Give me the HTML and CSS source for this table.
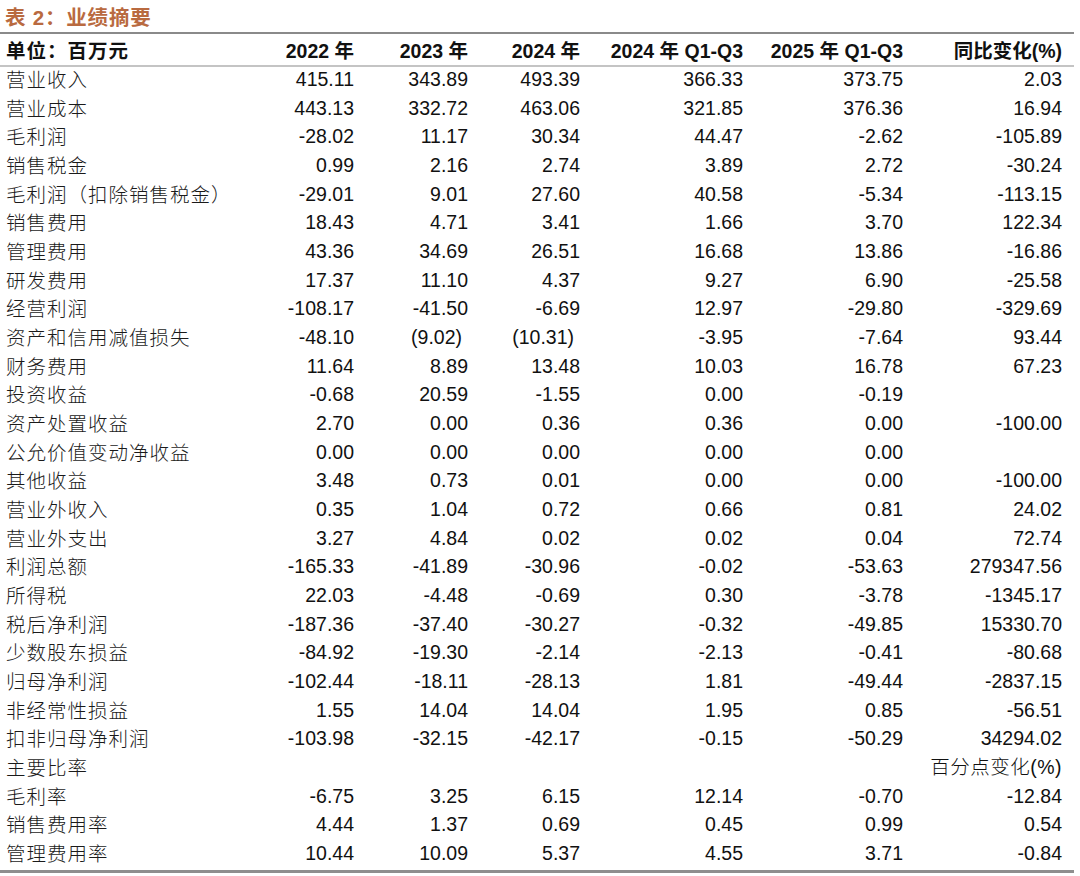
FILE: index.html
```html
<!DOCTYPE html>
<html lang="zh-CN">
<head>
<meta charset="utf-8">
<title>业绩摘要</title>
<link rel="stylesheet" href="styles.css">
</head>
<body>
<div class="wrap">
  <div class="title">表 2：业绩摘要</div>
  <table class="tbl">
    <colgroup>
      <col class="c-label"><col class="c1"><col class="c2"><col class="c3"><col class="c4"><col class="c5"><col class="c6">
    </colgroup>
    <thead>
      <tr>
        <th class="lbl">单位：百万元</th>
        <th>2022 年</th>
        <th>2023 年</th>
        <th>2024 年</th>
        <th>2024 年 Q1-Q3</th>
        <th>2025 年 Q1-Q3</th>
        <th>同比变化(%)</th>
      </tr>
    </thead>
    <tbody>
      <tr><td class="lbl">营业收入</td><td>415.11</td><td>343.89</td><td>493.39</td><td>366.33</td><td>373.75</td><td>2.03</td></tr>
      <tr><td class="lbl">营业成本</td><td>443.13</td><td>332.72</td><td>463.06</td><td>321.85</td><td>376.36</td><td>16.94</td></tr>
      <tr><td class="lbl">毛利润</td><td>-28.02</td><td>11.17</td><td>30.34</td><td>44.47</td><td>-2.62</td><td>-105.89</td></tr>
      <tr><td class="lbl">销售税金</td><td>0.99</td><td>2.16</td><td>2.74</td><td>3.89</td><td>2.72</td><td>-30.24</td></tr>
      <tr><td class="lbl">毛利润（扣除销售税金）</td><td>-29.01</td><td>9.01</td><td>27.60</td><td>40.58</td><td>-5.34</td><td>-113.15</td></tr>
      <tr><td class="lbl">销售费用</td><td>18.43</td><td>4.71</td><td>3.41</td><td>1.66</td><td>3.70</td><td>122.34</td></tr>
      <tr><td class="lbl">管理费用</td><td>43.36</td><td>34.69</td><td>26.51</td><td>16.68</td><td>13.86</td><td>-16.86</td></tr>
      <tr><td class="lbl">研发费用</td><td>17.37</td><td>11.10</td><td>4.37</td><td>9.27</td><td>6.90</td><td>-25.58</td></tr>
      <tr><td class="lbl">经营利润</td><td>-108.17</td><td>-41.50</td><td>-6.69</td><td>12.97</td><td>-29.80</td><td>-329.69</td></tr>
      <tr><td class="lbl">资产和信用减值损失</td><td>-48.10</td><td class="par">(9.02)</td><td class="par">(10.31)</td><td>-3.95</td><td>-7.64</td><td>93.44</td></tr>
      <tr><td class="lbl">财务费用</td><td>11.64</td><td>8.89</td><td>13.48</td><td>10.03</td><td>16.78</td><td>67.23</td></tr>
      <tr><td class="lbl">投资收益</td><td>-0.68</td><td>20.59</td><td>-1.55</td><td>0.00</td><td>-0.19</td><td></td></tr>
      <tr><td class="lbl">资产处置收益</td><td>2.70</td><td>0.00</td><td>0.36</td><td>0.36</td><td>0.00</td><td>-100.00</td></tr>
      <tr><td class="lbl">公允价值变动净收益</td><td>0.00</td><td>0.00</td><td>0.00</td><td>0.00</td><td>0.00</td><td></td></tr>
      <tr><td class="lbl">其他收益</td><td>3.48</td><td>0.73</td><td>0.01</td><td>0.00</td><td>0.00</td><td>-100.00</td></tr>
      <tr><td class="lbl">营业外收入</td><td>0.35</td><td>1.04</td><td>0.72</td><td>0.66</td><td>0.81</td><td>24.02</td></tr>
      <tr><td class="lbl">营业外支出</td><td>3.27</td><td>4.84</td><td>0.02</td><td>0.02</td><td>0.04</td><td>72.74</td></tr>
      <tr><td class="lbl">利润总额</td><td>-165.33</td><td>-41.89</td><td>-30.96</td><td>-0.02</td><td>-53.63</td><td>279347.56</td></tr>
      <tr><td class="lbl">所得税</td><td>22.03</td><td>-4.48</td><td>-0.69</td><td>0.30</td><td>-3.78</td><td>-1345.17</td></tr>
      <tr><td class="lbl">税后净利润</td><td>-187.36</td><td>-37.40</td><td>-30.27</td><td>-0.32</td><td>-49.85</td><td>15330.70</td></tr>
      <tr><td class="lbl">少数股东损益</td><td>-84.92</td><td>-19.30</td><td>-2.14</td><td>-2.13</td><td>-0.41</td><td>-80.68</td></tr>
      <tr><td class="lbl">归母净利润</td><td>-102.44</td><td>-18.11</td><td>-28.13</td><td>1.81</td><td>-49.44</td><td>-2837.15</td></tr>
      <tr><td class="lbl">非经常性损益</td><td>1.55</td><td>14.04</td><td>14.04</td><td>1.95</td><td>0.85</td><td>-56.51</td></tr>
      <tr><td class="lbl">扣非归母净利润</td><td>-103.98</td><td>-32.15</td><td>-42.17</td><td>-0.15</td><td>-50.29</td><td>34294.02</td></tr>
      <tr><td class="lbl">主要比率</td><td></td><td></td><td></td><td></td><td></td><td class="note">百分点变化(%)</td></tr>
      <tr><td class="lbl">毛利率</td><td>-6.75</td><td>3.25</td><td>6.15</td><td>12.14</td><td>-0.70</td><td>-12.84</td></tr>
      <tr><td class="lbl">销售费用率</td><td>4.44</td><td>1.37</td><td>0.69</td><td>0.45</td><td>0.99</td><td>0.54</td></tr>
      <tr><td class="lbl">管理费用率</td><td>10.44</td><td>10.09</td><td>5.37</td><td>4.55</td><td>3.71</td><td>-0.84</td></tr>
    </tbody>
  </table>
</div>
</body>
</html>
```

FILE: styles.css
```css
html, body {
  margin: 0;
  padding: 0;
  background: #ffffff;
}

body {
  font-family: "Liberation Sans", "Noto Sans CJK SC", sans-serif;
  color: #111111;
}

.wrap {
  width: 1074px;
}

.title {
  height: 32px;
  line-height: 36px;
  padding-left: 5px;
  font-family: "Liberation Sans", "Noto Sans CJK SC", sans-serif;
  font-weight: bold;
  font-size: 20.5px;
  color: #b96a40;
  letter-spacing: 0.8px;
  box-sizing: border-box;
}

.tbl {
  width: 1074px;
  border-collapse: collapse;
  table-layout: fixed;
  border-top: 2px solid #8a8a8a;
  border-bottom: 3px solid #8e8e8e;
}

.c-label { width: 254px; }
.c1 { width: 100px; }
.c2 { width: 114px; }
.c3 { width: 112px; }
.c4 { width: 163px; }
.c5 { width: 160px; }
.c6 { width: 171px; }

.tbl th,
.tbl td {
  padding: 0;
  text-align: right;
  white-space: nowrap;
  font-size: 19.5px;
}

.tbl th:last-child,
.tbl td:last-child {
  padding-right: 12px;
}

.tbl thead th {
  height: 30px;
  font-weight: bold;
  color: #111111;
  border-bottom: 2px solid #c4c4c4;
  vertical-align: middle;
  padding-bottom: 1px;
}

.tbl tbody td {
  line-height: 24.67px;
  vertical-align: middle;
  padding-bottom: 4px;
}

.tbl .lbl {
  text-align: left;
  padding-left: 6px;
  font-family: "Noto Sans CJK SC", sans-serif;
  letter-spacing: 1px;
  font-weight: 300;
  color: #1a1a1a;
}

.tbl thead .lbl {
  font-weight: bold;
  color: #111111;
}

.tbl .par {
  padding-right: 6px;
}

.tbl .note {
  font-family: "Liberation Sans", "Noto Sans CJK SC", sans-serif;
  letter-spacing: 0.5px;
  font-weight: 300;
}
```
